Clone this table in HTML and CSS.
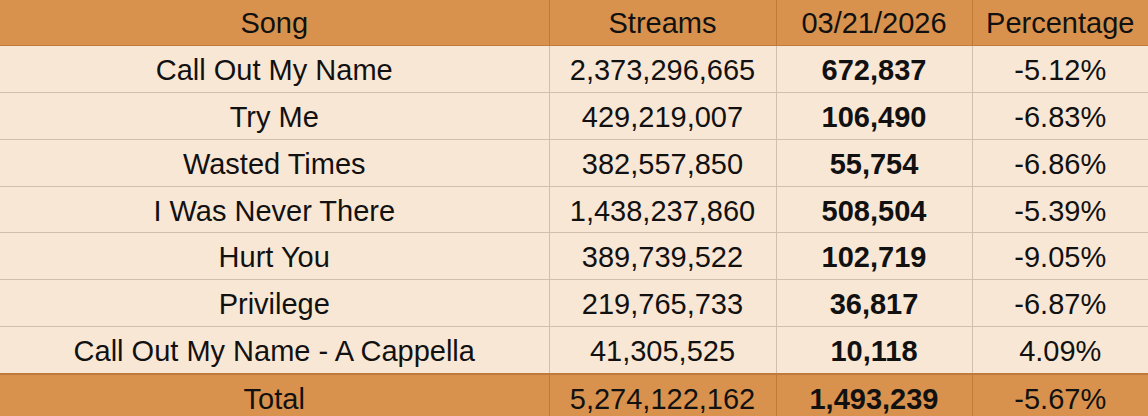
FILE: index.html
```html
<!DOCTYPE html>
<html>
<head>
<meta charset="utf-8">
<link rel="stylesheet" href="styles.css">
</head>
<body>
<table class="chart">
  <colgroup>
    <col class="c-song">
    <col class="c-streams">
    <col class="c-daily">
    <col class="c-pct">
  </colgroup>
  <thead>
    <tr class="head">
      <th>Song</th>
      <th>Streams</th>
      <th>03/21/2026</th>
      <th>Percentage</th>
    </tr>
  </thead>
  <tbody>
    <tr><td>Call Out My Name</td><td>2,373,296,665</td><td class="b">672,837</td><td>-5.12%</td></tr>
    <tr><td>Try Me</td><td>429,219,007</td><td class="b">106,490</td><td>-6.83%</td></tr>
    <tr><td>Wasted Times</td><td>382,557,850</td><td class="b">55,754</td><td>-6.86%</td></tr>
    <tr><td>I Was Never There</td><td>1,438,237,860</td><td class="b">508,504</td><td>-5.39%</td></tr>
    <tr><td>Hurt You</td><td>389,739,522</td><td class="b">102,719</td><td>-9.05%</td></tr>
    <tr><td>Privilege</td><td>219,765,733</td><td class="b">36,817</td><td>-6.87%</td></tr>
    <tr><td>Call Out My Name - A Cappella</td><td>41,305,525</td><td class="b">10,118</td><td>4.09%</td></tr>
  </tbody>
  <tfoot>
    <tr class="total"><td>Total</td><td>5,274,122,162</td><td class="b">1,493,239</td><td>-5.67%</td></tr>
  </tfoot>
</table>
</body>
</html>
```

FILE: styles.css
```css
html, body {
  margin: 0;
  padding: 0;
  background: #f9e7d5;
  overflow: hidden;
}

.chart {
  width: 1148px;
  border-collapse: collapse;
  table-layout: fixed;
  font-family: "Liberation Sans", Arial, sans-serif;
  font-size: 29px;
  color: #111;
}

.c-song { width: 549px; }
.c-streams { width: 227px; }
.c-daily { width: 196px; }
.c-pct { width: 176px; }

.chart th,
.chart td {
  padding: 0;
  text-align: center;
  font-weight: normal;
  line-height: 32px;
}

.chart td {
  height: 43.86px;
  border: 1px solid #cfbfae;
  background: #f9e7d5;
  padding-top: 2px;
}

.chart tbody tr:first-child td { border-top: none; }

.head th {
  height: 44px;
  background: #d9924d;
  border-left: 1px solid #c07a38;
  border-right: 1px solid #c07a38;
  border-bottom: 1px solid #bf7b3c;
  padding-top: 1px;
}

.total td {
  height: 33px;
  background: #d9924d;
  border-color: #c07a38;
  border-top: 2px solid #bf7b3c;
  padding-top: 8px;
  vertical-align: top;
}

.chart tr > :first-child { border-left: none; }
.chart tr > :last-child { border-right: none; }

.chart .b { font-weight: bold; }
```
